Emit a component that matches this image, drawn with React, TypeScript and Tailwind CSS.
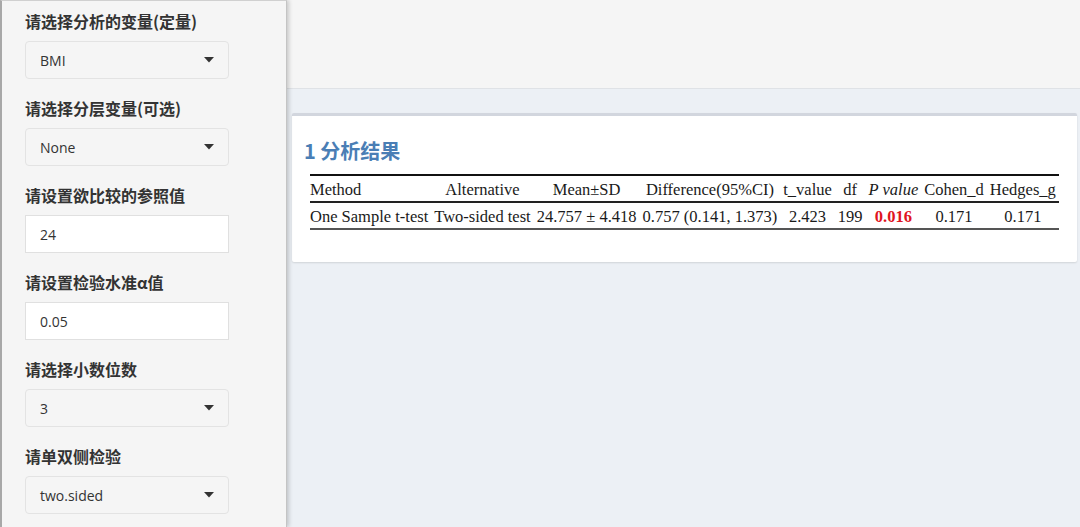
import React from 'react';

type Field = { label: string; value: string; kind: 'select' | 'input' };

const fields: Field[] = [
  { label: '请选择分析的变量(定量)', value: 'BMI', kind: 'select' },
  { label: '请选择分层变量(可选)', value: 'None', kind: 'select' },
  { label: '请设置欲比较的参照值', value: '24', kind: 'input' },
  { label: '请设置检验水准α值', value: '0.05', kind: 'input' },
  { label: '请选择小数位数', value: '3', kind: 'select' },
  { label: '请单双侧检验', value: 'two.sided', kind: 'select' },
];

const cjk = { fontFamily: '"Noto Sans CJK SC", "Noto Sans", sans-serif' };
const serif = { fontFamily: '"Liberation Serif", "Times New Roman", serif' };

function Caret() {
  return (
    <svg width="10" height="6" viewBox="0 0 10 6" className="shrink-0">
      <path d="M0 0 L10 0 L5 5.5 Z" fill="#333" />
    </svg>
  );
}

function Sidebar() {
  return (
    <div className="w-[287px] shrink-0 h-full bg-[#f5f5f5] border-l-2 border-[#a8a8a8] border-t border-t-[#d0d0d0] border-r border-r-[#c4c4c4] shadow-[2px_0_4px_rgba(0,0,0,0.18)] z-10 pl-[23px] pt-[9px]">
      {fields.map((f) => (
        <div key={f.label} className="mb-[18px]">
          <div className="text-[16px] font-bold text-[#333] leading-[22px] h-[22px]" style={cjk}>
            {f.label}
          </div>
          <div
            className={
              f.kind === 'select'
                ? 'mt-[9px] w-[204px] h-[38px] rounded-[4px] border border-[#e3e3e3] bg-[#f5f5f5] flex items-center justify-between pl-[14px] pr-[14px]'
                : 'mt-[9px] w-[204px] h-[38px] border border-[#e0e0e0] bg-white flex items-center pl-[14px]'
            }
          >
            <span className="text-[14px] text-[#333]" style={{ fontFamily: '"Open Sans", "Noto Sans", sans-serif' }}>
              {f.value}
            </span>
            {f.kind === 'select' && <Caret />}
          </div>
        </div>
      ))}
    </div>
  );
}

const headers = ['Method', 'Alternative', 'Mean±SD', 'Difference(95%CI)', 't_value', 'df', 'P value', 'Cohen_d', 'Hedges_g'];
const row = ['One Sample t-test', 'Two-sided test', '24.757 ± 4.418', '0.757 (0.141, 1.373)', '2.423', '199', '0.016', '0.171', '0.171'];

function ResultTable() {
  return (
    <table className="ml-[18px] border-collapse text-[16.5px] text-[#1a1a1a] leading-[20px]" style={serif}>
      <thead>
        <tr className="border-t-2 border-[#111] border-b-2 border-b-[#222]">
          {headers.map((h, i) => (
            <th
              key={h}
              className={
                'font-normal h-[27px] pt-[3px] px-[3px] whitespace-nowrap ' +
                (i === 0 ? 'text-left pl-0 pr-[14px]' : 'text-center') +
                (h === 'P value' ? ' italic' : '')
              }
            >
              {h}
            </th>
          ))}
        </tr>
      </thead>
      <tbody>
        <tr className="border-b-2 border-[#555]">
          {row.map((c, i) => (
            <td
              key={i}
              className={
                'h-[27px] pt-[3px] px-[3px] whitespace-nowrap ' +
                (i === 0 ? 'text-left pl-0' : 'text-center') +
                (i === 6 ? ' text-[#e0141e] font-bold' : '')
              }
            >
              {c}
            </td>
          ))}
        </tr>
      </tbody>
    </table>
  );
}

export default function App() {
  return (
    <div className="flex w-[1080px] h-[527px] overflow-hidden bg-[#ecf0f5]">
      <Sidebar />
      <div className="flex-1 flex flex-col min-w-0">
        <div className="h-[89px] shrink-0 bg-[#f5f5f5] border-b border-[#dfe2e6]" />
        <div className="pt-[24px] pl-[5px] pr-[3px]">
          <div className="bg-white border-t-[3px] border-[#d2d6de] rounded-[2px] shadow-[0_1px_2px_rgba(0,0,0,0.12)] h-[149px] pt-[21px]">
            <h3 className="ml-[12px] text-[20px] font-bold text-[#4a7eb5] leading-[28px] mb-[9px]" style={cjk}>
              1 分析结果
            </h3>
            <ResultTable />
          </div>
        </div>
      </div>
    </div>
  );
}
